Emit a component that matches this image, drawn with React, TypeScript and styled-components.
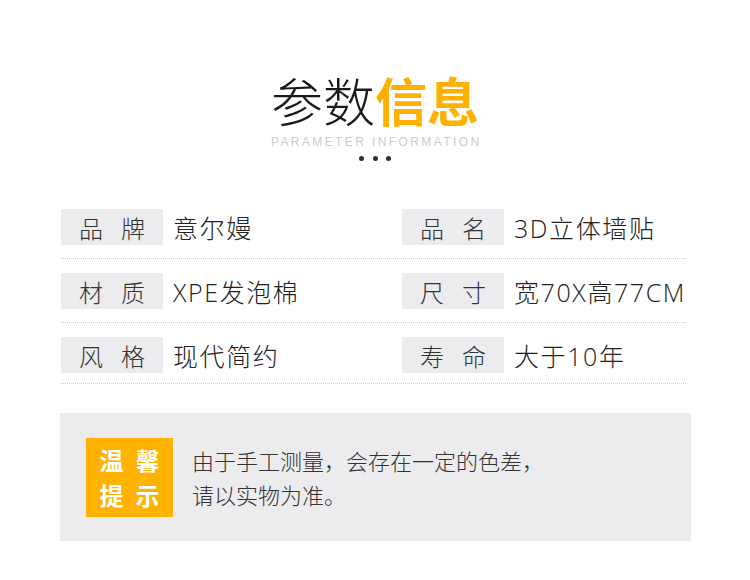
import styled, { createGlobalStyle } from 'styled-components';

const GlobalStyle = createGlobalStyle`
  body {
    margin: 0;
    background: #ffffff;
    font-family: "Noto Sans CJK SC", "Noto Sans", sans-serif;
  }
`;

const specs: [string, string][][] = [
  [
    ['品牌', '意尔嫚'],
    ['品名', '3D立体墙贴'],
  ],
  [
    ['材质', 'XPE发泡棉'],
    ['尺寸', '宽70X高77CM'],
  ],
  [
    ['风格', '现代简约'],
    ['寿命', '大于10年'],
  ],
];

export default function App(): JSX.Element {
  return (
    <Page>
      <GlobalStyle />
      <Header>
        <Title>
          <Thin>参数</Thin>
          <Strong>信息</Strong>
        </Title>
        <Subtitle>PARAMETER INFORMATION</Subtitle>
        <Dots>
          <Dot />
          <Dot />
          <Dot />
        </Dots>
      </Header>

      <SpecTable>
        {specs.map((row, i) => (
          <SpecRow key={i}>
            {row.map(([label, value]) => (
              <SpecCell key={label}>
                <SpecLabel>{label}</SpecLabel>
                <SpecValue>{value}</SpecValue>
              </SpecCell>
            ))}
          </SpecRow>
        ))}
      </SpecTable>

      <Notice>
        <NoticeBadge>
          <span>温馨</span>
          <span>提示</span>
        </NoticeBadge>
        <NoticeText>
          由于手工测量，会存在一定的色差，
          <br />
          请以实物为准。
        </NoticeText>
      </Notice>
    </Page>
  );
}

const Page = styled.div`
  width: 750px;
  height: 580px;
  overflow: hidden;
  padding-top: 75px;
  box-sizing: border-box;
`;

const Header = styled.header`
  display: flex;
  flex-direction: column;
  align-items: center;
`;

const Title = styled.h1`
  margin: 0;
  font-size: 52px;
  line-height: 50px;
  font-weight: 400;
`;

const Thin = styled.span`
  color: #1a1a1a;
  font-weight: 200;
`;

const Strong = styled.span`
  color: #ffb000;
  font-weight: 700;
`;

const Subtitle = styled.div`
  margin-top: 11px;
  font-family: "Liberation Sans", Arial, sans-serif;
  font-size: 12px;
  line-height: 12px;
  letter-spacing: 2.4px;
  color: #cccccc;
  padding-left: 2.4px;
`;

const Dots = styled.div`
  display: flex;
  gap: 8.5px;
  margin-top: 8px;
`;

const Dot = styled.span`
  width: 5px;
  height: 5px;
  border-radius: 50%;
  background: #2a2f40;
`;

const SpecTable = styled.div`
  margin: 48px 64px 0 61px;
`;

const SpecRow = styled.div`
  display: grid;
  grid-template-columns: 341px 1fr;
  padding-bottom: 13px;
  margin-bottom: 14px;
  border-bottom: 1px dotted #c9c9c9;

  &:last-child {
    padding-bottom: 10px;
    margin-bottom: 0;
  }
`;

const SpecCell = styled.div`
  display: flex;
  align-items: center;
  gap: 10px;
`;

const SpecLabel = styled.div`
  width: 102px;
  height: 36px;
  display: flex;
  align-items: center;
  justify-content: center;
  padding-left: 18px;
  box-sizing: border-box;
  background: #ececef;
  color: #333333;
  font-size: 24px;
  font-weight: 300;
  letter-spacing: 18px;
`;

const SpecValue = styled.div`
  font-family: "Open Sans", "Noto Sans CJK SC", sans-serif;
  color: #222222;
  font-size: 25px;
  font-weight: 300;
  letter-spacing: 1.6px;
  white-space: nowrap;
`;

const Notice = styled.section`
  margin: 29px 0 0 60px;
  width: 631px;
  height: 128px;
  box-sizing: border-box;
  padding: 0 26px;
  background: #ececef;
  display: flex;
  align-items: center;
  gap: 19px;
`;

const NoticeBadge = styled.div`
  width: 87px;
  height: 79px;
  background: #ffb200;
  color: #ffffff;
  font-size: 24px;
  font-weight: 700;
  line-height: 35px;
  letter-spacing: 12px;
  padding-left: 12px;
  box-sizing: border-box;
  display: flex;
  flex-direction: column;
  align-items: center;
  justify-content: center;
`;

const NoticeText = styled.p`
  margin: 0;
  color: #333333;
  font-size: 22px;
  font-weight: 300;
  line-height: 34px;
`;
